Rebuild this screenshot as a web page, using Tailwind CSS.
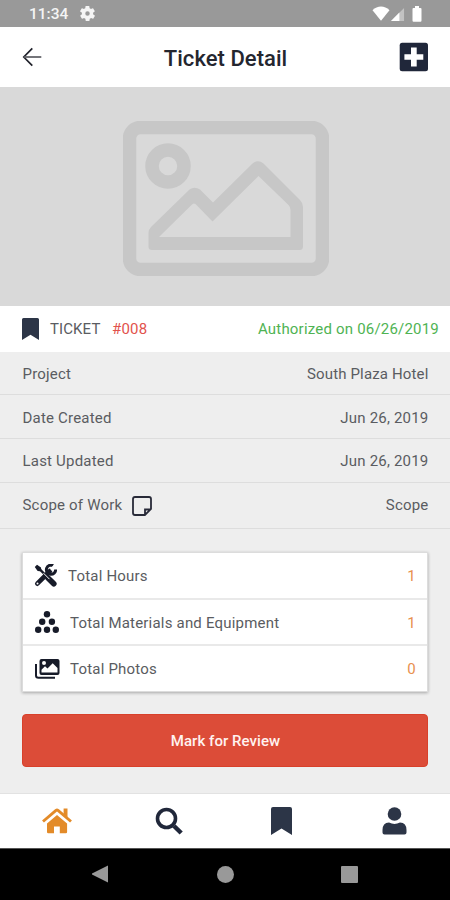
<!DOCTYPE html>
<html lang="en">
<head>
<meta charset="utf-8">
<meta name="viewport" content="width=device-width, initial-scale=1">
<title>Ticket Detail</title>
<script src="https://cdn.jsdelivr.net/npm/@tailwindcss/browser@4"></script>
</head>
<body class="bg-[#eeeeee]">
<div class="w-[450px] h-[900px] overflow-hidden flex flex-col bg-[#eeeeee] font-['Roboto',sans-serif] text-[15px] leading-[20px] text-[#5a5c61]">

  <!-- Status bar -->
  <div class="h-[27px] shrink-0 bg-[#999999] flex items-center justify-between pl-[29px] pr-[28px] text-[#f4f4f4]">
    <div class="flex items-center">
      <span class="w-[39px] text-[15.5px] font-medium whitespace-nowrap pt-[1px]">11:34</span>
      <svg class="ml-[12px] size-[15px]" viewBox="2 2 20 20" fill="currentColor"><path fill-rule="evenodd" d="M19.4 13c.1-.6.1-1.400 0-2l2.100-1.600c.2-.2.3-.4.1-.6l-2-3.500c-.1-.2-.4-.3-.6-.2l-2.500 1c-.5-.4-1.100-.7-1.700-1l-.4-2.600c0-.3-.2-.5-.5-.5h-4c-.2 0-.5.2-.5.4l-.4 2.700c-.6.2-1.200.6-1.700 1l-2.500-1c-.2-.1-.5 0-.6.2l-2 3.500c-.1.200-.1.500.1.600L4.600 11c-.1.600-.1 1.400 0 2l-2.100 1.600c-.2.200-.3.500-.1.700l2 3.400c.1.200.4.300.6.200l2.500-1c.5.400 1.100.8 1.700 1l.4 2.700c0 .2.200.4.500.4h4c.2 0 .5-.2.500-.4l.4-2.700c.6-.2 1.200-.6 1.700-1l2.500 1c.2.1.5 0 .6-.2l2-3.400c.1-.2.1-.5-.1-.7L19.400 13ZM12 15a3 3 0 1 1 0-6 3 3 0 0 1 0 6Z"/></svg>
    </div>
    <div class="flex items-center">
      <svg class="w-[18px] h-[15px]" viewBox="0 0 18 15" fill="white"><path d="M9 14.800 0.500 4.300C3 1.800 6 .6 9 .6s6 1.200 8.500 3.700Z"/></svg>
      <svg class="w-[14px] h-[14px] ml-[1px]" viewBox="0 0 15 15"><path d="M14 1v14H0Z" fill="white" opacity=".4"/><path d="M9 6v9H0Z" fill="white"/></svg>
      <svg class="w-[10px] h-[16px] ml-[7px]" viewBox="0 0 10 16" fill="white"><path d="M3 0h4v2h1.500q1 0 1 1v11.500q0 1.200-1 1.200h-7q-1 0-1-1.200V3q0-1 1-1H3Z"/></svg>
    </div>
  </div>

  <!-- Header -->
  <header class="h-[60px] shrink-0 bg-white flex items-center justify-between pl-[22px] pr-[21px] text-[#24262f]">
    <svg class="w-[20px] h-[20px]" viewBox="0 0 20 20" fill="none" stroke="#20222b" stroke-width="1.700"><path d="M10.300 1.300 1.800 10l8.500 8.700"/><path d="M2 10h17.300" stroke="#5c5d62"/></svg>
    <h1 class="text-[22px] leading-[26px] font-medium tracking-[0.05px] whitespace-nowrap pt-[3px] ml-[10px]">Ticket Detail</h1>
    <svg class="size-[30px]" viewBox="0 0 30 30"><rect x=".7" y=".7" width="28.300" height="28.500" rx="2.500" fill="#20273a"/><path d="M12 5.500h5.700v6.700h6.600v5.600h-6.600v6.700H12v-6.700H5.400v-5.600H12Z" fill="white"/></svg>
  </header>

  <!-- Photo placeholder -->
  <div class="h-[219px] shrink-0 bg-[#d9d9d9] flex justify-center pt-[34px] pl-[1px]">
    <svg class="w-[206px] h-[155px]" viewBox="0 0 206 155" fill="none" stroke="#c7c7c7"><rect x="6.500" y="6.500" width="193" height="142" rx="11" stroke-width="13.500"/><circle cx="45" cy="45" r="16" stroke-width="13.500"/><path fill="#c7c7c7" stroke="none" fill-rule="evenodd" d="M28 106 66.500 68.500Q71.500 65 77 68.500L90 81.500 129.500 42.500Q135 38 140.500 42.500L177 79Q180 82 180 86V125.500Q180 129 176.500 129H29Q25.500 129 25.500 125.500V112Q25.500 108.500 28 106ZM36 116H167.500V89Q167.500 86 165.500 84L135.500 55 89.500 100.500 72.500 83Q70.500 81.500 68.500 84Z"/></svg>
  </div>

  <!-- Ticket summary -->
  <div class="h-[46px] shrink-0 bg-white flex items-center pl-[22px] pr-[11px]">
    <svg class="w-[17px] h-[22px]" viewBox="0 0 17 22" fill="#2c3547"><path d="M0 1.500Q0 0 1.500 0h14Q17 0 17 1.500V22l-8.500-5.300L0 22Z"/></svg>
    <span class="ml-[11px] w-[62px] whitespace-nowrap tracking-[0.1px]">TICKET</span>
    <span class="text-[#e2524c] tracking-[0.2px]">#008</span>
    <span class="ml-auto text-[#4fb353] tracking-[0.2px] whitespace-nowrap">Authorized on 06/26/2019</span>
  </div>

  <!-- Details -->
  <div class="shrink-0 flex flex-col tracking-[0.2px]">
    <div class="h-[43px] border-b border-[#dddddd] flex items-center justify-between pl-[22.500px] pr-[21.500px] pt-[2px]"><span>Project</span><span class="tracking-[0.15px]">South Plaza Hotel</span></div>
    <div class="h-[44px] border-b border-[#dddddd] flex items-center justify-between pl-[22.500px] pr-[21.500px] pt-[2px]"><span>Date Created</span><span>Jun 26, 2019</span></div>
    <div class="h-[44px] border-b border-[#dddddd] flex items-center justify-between pl-[22.500px] pr-[21.500px]"><span>Last Updated</span><span>Jun 26, 2019</span></div>
    <div class="h-[46px] border-b border-[#dddddd] flex items-center justify-between pl-[22.500px] pr-[21.500px] pb-[1px]">
      <div class="flex items-center">
        <span>Scope of Work</span>
        <svg class="ml-[10px] size-[20px] relative top-[1px]" viewBox="0 0 20 20" fill="none" stroke="#282a38" stroke-width="1.800"><path d="M13 19H3Q1 19 1 17V3Q1 1 3 1H17Q19 1 19 3V13L13 19V13.500H19"/></svg>
      </div>
      <span>Scope</span>
    </div>
  </div>

  <!-- Totals -->
  <div class="mt-[23px] mx-[22px] h-[140px] shrink-0 bg-white border border-[#dcdcdc] shadow-[0_1px_3px_rgba(0,0,0,0.3)] flex flex-col tracking-[0.2px]">
    <div class="h-[47px] shrink-0 border-b-2 border-[#e9e9e9] flex items-center pl-[11px] pr-[11px]">
      <svg class="w-[23px] h-[23px]" viewBox="0 0 23 23" fill="none" stroke="#171b29"><path d="M2.500 2.500 5 4.700 11.500 11" stroke-width="2.400"/><path d="M.8 3 3 .8 7 3.600 7.300 6 6 7.300 3.600 7Z" fill="#171b29" stroke="none"/><path d="m14 14 5.800 5.800" stroke-width="5.600" stroke-linecap="round"/><path d="M3.300 19.700 16 7" stroke-width="4.600" stroke-linecap="round"/><path d="M19.200 1.700a4.600 4.600 0 1 0 2.400 3.800" stroke-width="3"/><path d="M22.500.5 17 6" stroke="white" stroke-width="3.200"/><path d="m9.500 9.200 6 6" stroke="white" stroke-width="1"/><circle cx="3.500" cy="19.500" r="1" fill="white" stroke="none"/></svg>
      <span class="ml-[11px] pt-[1px]">Total Hours</span><span class="ml-auto text-[#e8904f] pt-[1px]">1</span>
    </div>
    <div class="h-[46px] shrink-0 border-b-2 border-[#e9e9e9] flex items-center pl-[12px] pr-[11px]">
      <svg class="w-[24px] h-[22px]" viewBox="0 0 24 22" fill="#171b29"><circle cx="12" cy="3.300" r="3.200"/><circle cx="7.200" cy="10.800" r="3.200"/><circle cx="16.900" cy="10.800" r="3.200"/><circle cx="3.200" cy="18.700" r="3.200"/><circle cx="12" cy="18.700" r="3.200"/><circle cx="20.800" cy="18.700" r="3.200"/></svg>
      <span class="ml-[11px] pt-[1px]">Total Materials and Equipment</span><span class="ml-auto text-[#e8904f] pt-[1px]">1</span>
    </div>
    <div class="flex-1 flex items-center pl-[12px] pr-[11px]">
      <svg class="w-[25px] h-[20px]" viewBox="0 0 25 20" fill="none"><path d="M1 5v11.500Q1 18.700 3.500 18.700H20" stroke="#171b29" stroke-width="2"/><path fill="#171b29" fill-rule="evenodd" d="M6.500 0h16Q24.500 0 24.500 2v12q0 2-2 2h-16q-2 0-2-2V2q0-2 2-2ZM6.500 13.600H22.500V9L17.700 4.200 12.500 9.500 10 7.300 6.500 10.800ZM9 2a2 2 0 1 0 0 4 2 2 0 0 0 0-4Z"/></svg>
      <span class="ml-[10px] pt-[1px]">Total Photos</span><span class="ml-auto text-[#e8904f] pt-[1px]">0</span>
    </div>
  </div>

  <!-- Primary action -->
  <button class="mt-[22px] mx-[22px] h-[53px] shrink-0 rounded-[4px] bg-[#dc4c38] border border-[#d8402a] text-[#fff2f0] font-medium whitespace-nowrap tracking-[0.05px] pt-[1px] pl-[1px]">Mark for Review</button>

  <!-- Tab bar -->
  <nav class="mt-auto h-[55px] shrink-0 bg-white border-t border-[#e2e2e2] grid grid-cols-[112px_112px_113px_113px] place-items-center">
    <svg class="w-[30px] h-[26px] ml-[2px]" viewBox="0 0 30 26" fill="#e38b29"><path d="M15 7 5 15.600V24q0 1.300 1.300 1.300H12V18.500h5.800v6.800h6q1.300 0 1.300-1.300V15.600Z"/><path d="M1 13.500 14 2.400Q15 1.600 16 2.400L29 13.500" fill="none" stroke="#e38b29" stroke-width="2.900"/><path d="M21.600.5H25.500V11l-3.900-3.500Z"/></svg>
    <svg class="w-[28px] h-[28px] ml-[2px]" viewBox="0 0 28 28" fill="none" stroke="#20273a"><circle cx="11.500" cy="11.500" r="9" stroke-width="3.600"/><path d="m19 19 7.200 7" stroke-width="4.500"/></svg>
    <svg class="w-[21px] h-[28px] ml-[2px]" viewBox="0 0 21 28" fill="#2c3547"><path d="M0 2Q0 0 2 0h17q2 0 2 2v26l-10.500-6.500L0 28Z"/></svg>
    <svg class="w-[25px] h-[28px] ml-[2px]" viewBox="0 0 25 28" fill="#2c3547"><circle cx="12.500" cy="7" r="6.800"/><path d="M7 15.500q5.500 2.800 11 0 6.500.3 6.500 7.500v2.500q0 2-2 2h-20q-2 0-2-2V23Q.5 15.800 7 15.500Z"/></svg>
  </nav>

  <!-- System navigation -->
  <div class="h-[52px] shrink-0 bg-black border-t border-[#555555] flex items-center justify-between pl-[91px] pr-[92px] pb-[1px]">
    <svg class="w-[18px] h-[18px]" viewBox="0 0 18 18" fill="#999999"><path d="M17 .5v17L1 9.500V8.500Z"/></svg>
    <div class="size-[17px] rounded-full bg-[#999999]"></div>
    <div class="size-[17px] rounded-[1px] bg-[#999999]"></div>
  </div>
</div>
</body>
</html>
